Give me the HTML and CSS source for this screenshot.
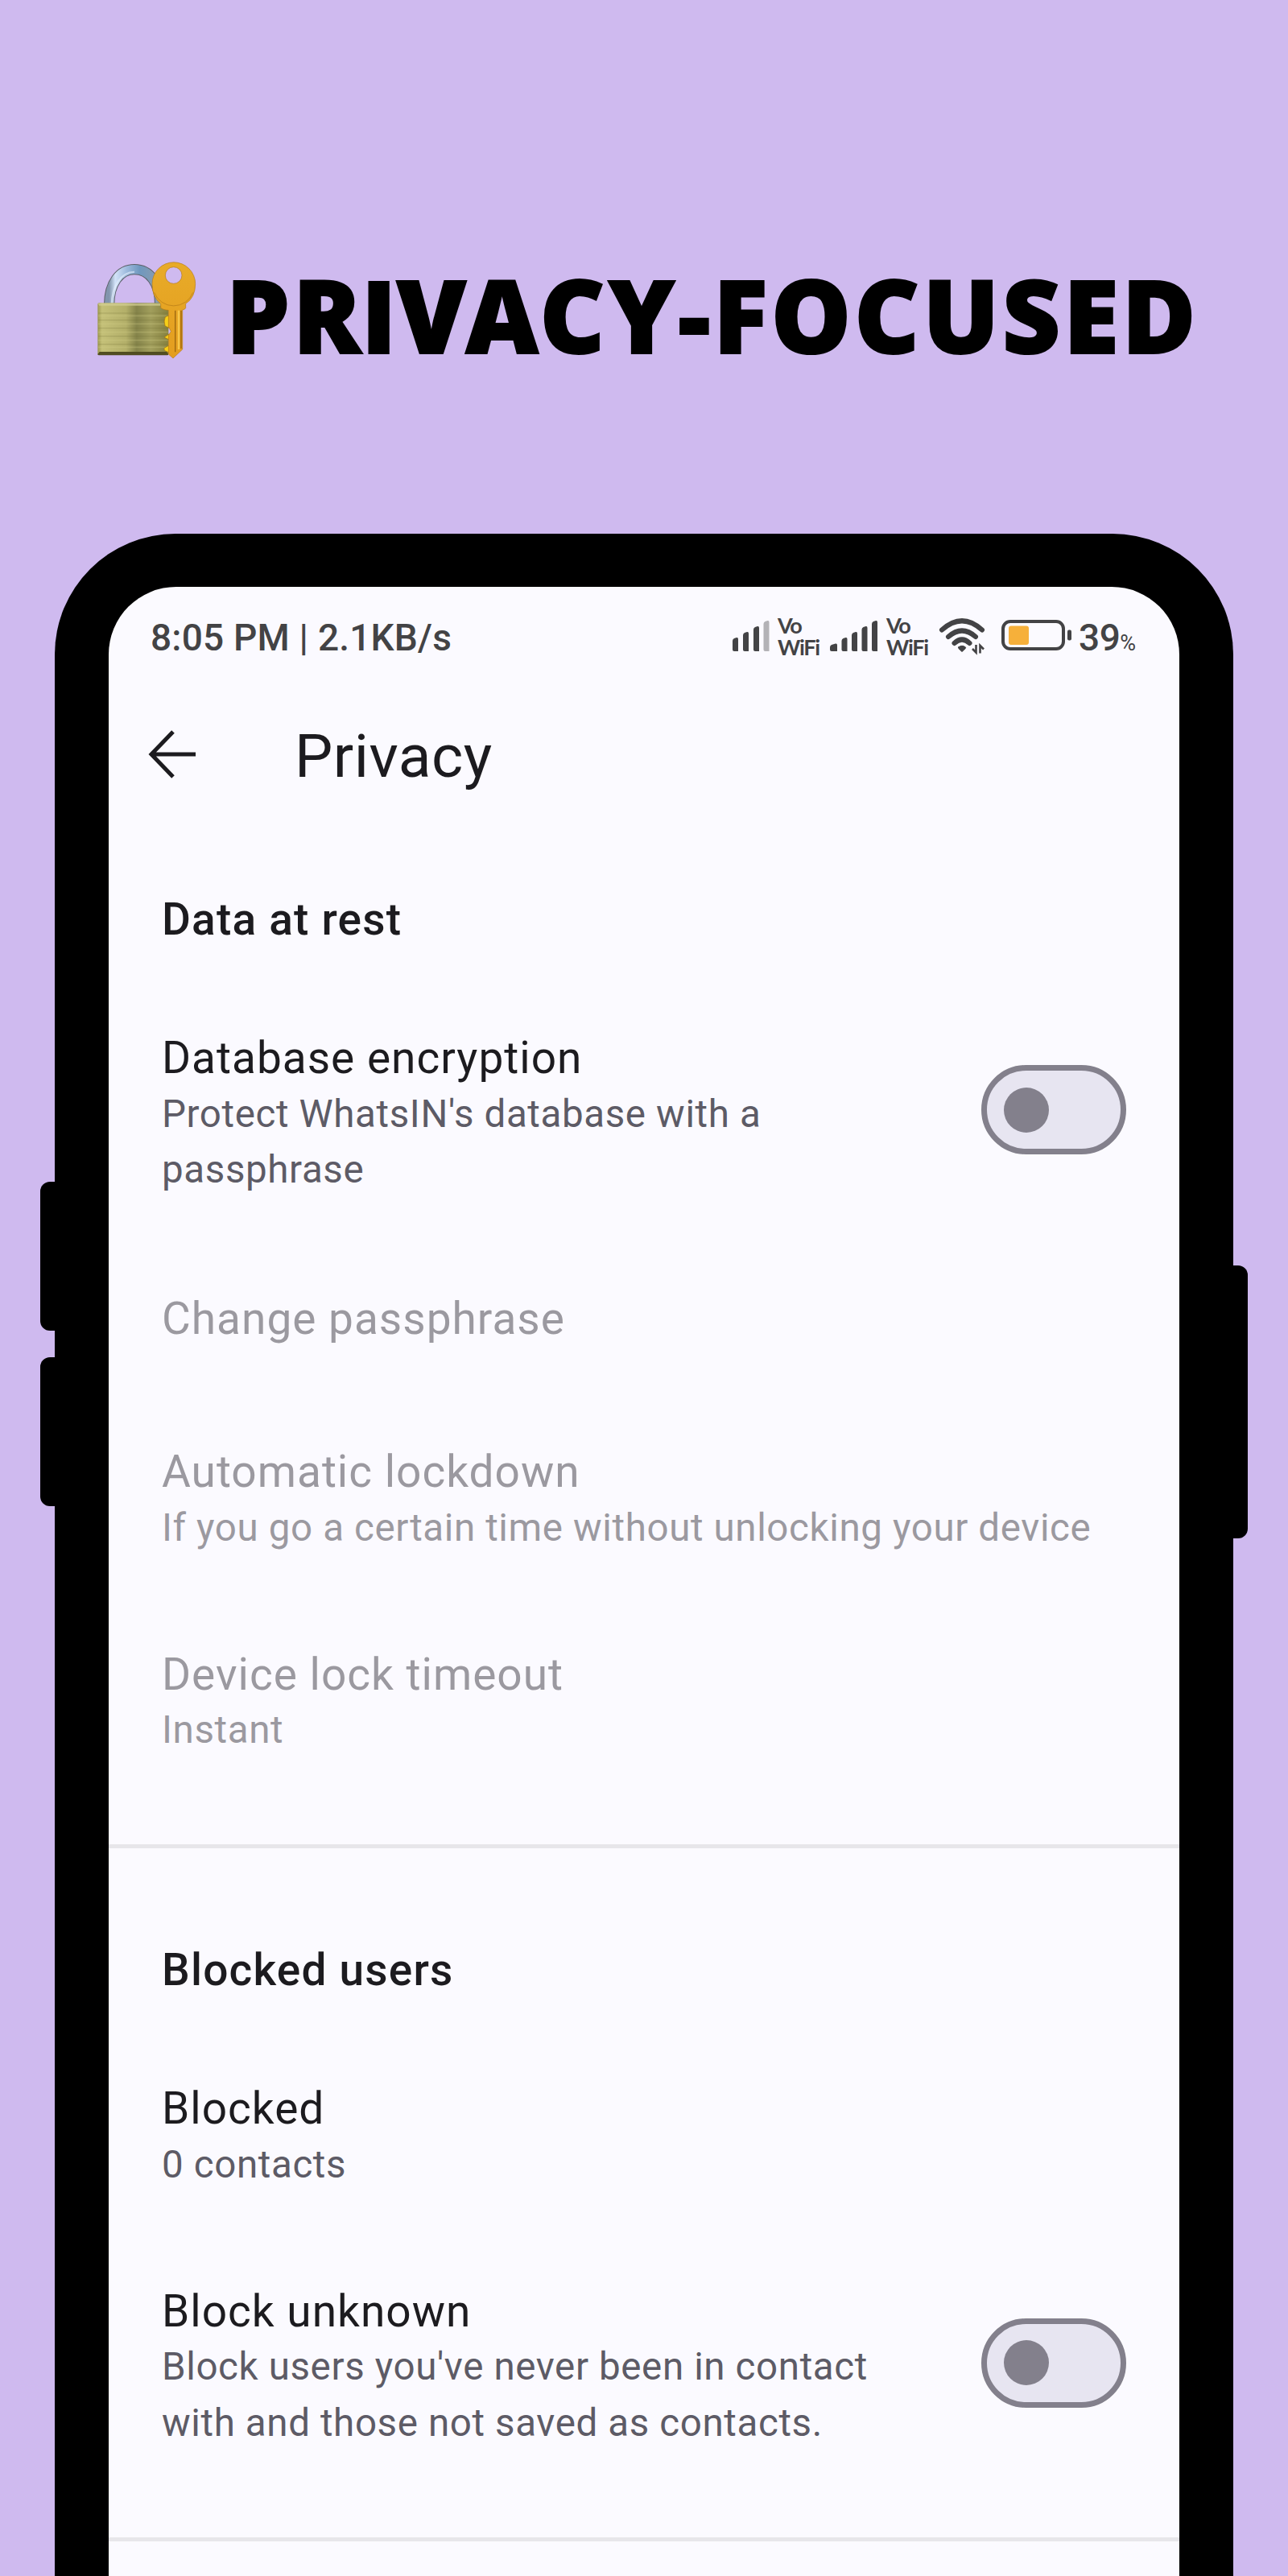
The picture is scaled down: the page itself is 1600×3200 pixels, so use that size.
FILE: index.html
```html
<!DOCTYPE html>
<html lang="en">

<head>
    <meta charset="UTF-8" />
    <meta name="viewport" content="width=device-width, initial-scale=1.0" />
    <title>Privacy-Focused</title>
    <link rel="stylesheet" href="styles.css">
</head>

<body>
    <div class="headline">
        <svg class="lock" viewBox="60 74 372 366">
            <defs>
                <linearGradient id="brass" x1="0" x2="1" y1="0" y2="0">
                    <stop offset="0" stop-color="#9c9850" />
                    <stop offset="0.06" stop-color="#c4c078" />
                    <stop offset="0.4" stop-color="#b3af69" />
                    <stop offset="0.55" stop-color="#84834a" />
                    <stop offset="0.75" stop-color="#a19e5c" />
                    <stop offset="1" stop-color="#85803f" />
                </linearGradient>
                <linearGradient id="steel" x1="0" x2="1" y1="0" y2="0">
                    <stop offset="0" stop-color="#8295ad" />
                    <stop offset="0.12" stop-color="#d3e3f8" />
                    <stop offset="0.35" stop-color="#9cb9dc" />
                    <stop offset="0.6" stop-color="#6f98bf" />
                    <stop offset="1" stop-color="#8c9cad" />
                </linearGradient>
                <linearGradient id="gold" x1="0" x2="0" y1="0" y2="1">
                    <stop offset="0" stop-color="#e8ab28" />
                    <stop offset="1" stop-color="#e39d1f" />
                </linearGradient>
            </defs>
            <path d="M107 234 C107 155 146 103 201 103 C258 103 296 155 296 234" fill="none" stroke="#5c6068" stroke-width="40" />
            <path d="M107 234 C107 155 146 103 201 103 C258 103 296 155 296 234" fill="none" stroke="url(#steel)" stroke-width="34" />
            <path d="M116 234 C117 166 150 113 201 112" fill="none" stroke="#e6f0fd" stroke-width="6" opacity="0.6" />
            <rect x="64" y="228" width="264" height="194" rx="5" fill="url(#brass)" />
            <path d="M65 230h262l-6 8H70z" fill="#d4d094" opacity="0.7" />
            <path d="M66 266h260M66 292h260M66 322h260M66 352h260M66 382h260" stroke="#706d34" stroke-width="2" opacity="0.45" />
            <path d="M66 276h260M66 306h260M66 337h260M66 367h260M66 393h260" stroke="#d3cf88" stroke-width="5" opacity="0.3" />
            <path d="M71 410h250l7 9q0 4-5 4H69q-5 0-5-4z" fill="#514d21" />
            <path d="M330 274l-14 6q-7 15-1 34l15 7zM330 344l-18 12 18 9zM330 386l-18 10q-2 8 5 11l13 6z" fill="#f6cf19" stroke="#9b6b10" stroke-width="2" />
            <path d="M267 157a80 80 0 1 1 161 0q0 50-36 74v16q-2 5-12 7v147l-35 33-17-15v-70l9-15-9-18V255q-21-1-29-9V231q-32-24-32-74zM347 94a31 31 0 1 0 0 62a31 31 0 0 0 0-62z" fill="url(#gold)" fill-rule="evenodd" stroke="#b77c16" stroke-width="2" />
            <path d="M275 189a77 77 0 0 0 144 0" fill="none" stroke="#bd8118" stroke-width="2.5" />
            <path d="M353 256v155" stroke="#9d6811" stroke-width="4" />
            <path d="M366 256v145" stroke="#f7c749" stroke-width="7" />
            <path d="M375 256v142" stroke="#b2760f" stroke-width="6" />
        </svg>
        <h1>PR<span class="plain">I</span>VACY-FOCUSED</h1>
    </div>

    <div class="phone">
        <span class="side-button volume-up"></span>
        <span class="side-button volume-down"></span>
        <span class="side-button power"></span>

        <div class="screen">
            <div class="status-bar">
                <span class="clock">8:05 PM | 2.1KB/s</span>
                <div class="status-icons">
                    <svg class="signal" width="46" height="48" viewBox="0 0 46 48" fill="#434345">
                        <path d="M0 28q0-2 2-3l3-1q2-.5 2 2v15H2q-2 0-2-2z" />
                        <path d="M13 21q0-2 2-3l3-1q2-.5 2 2v22h-5q-2 0-2-2z" />
                        <path d="M26 14q0-2 2-3l3-1q2-.5 2 2v29h-5q-2 0-2-2z" />
                        <path d="M38.500 7q0-2 2-3l3-1q2-.5 2 2v36h-5q-2 0-2-2z" fill="#b3b2b6" />
                    </svg>
                    <div class="vowifi"><span>Vo</span><span>WiFi</span></div>
                    <svg class="signal" width="60" height="48" viewBox="0 0 60 48" fill="#434345">
                        <path d="M0 36q0-2 2-3l5-1.500q2-.5 2 2V41H2q-2 0-2-2z" />
                        <path d="M14.500 28q0-2 2-3l3-1q2-.5 2 2v15h-5q-2 0-2-2z" />
                        <path d="M27 21q0-2 2-3l3-1q2-.5 2 2v22h-5q-2 0-2-2z" />
                        <path d="M39.500 14q0-2 2-3l3-1q2-.5 2 2v29h-5q-2 0-2-2z" />
                        <path d="M52 7q0-2 2-3l3-1q2-.5 2 2v36h-5q-2 0-2-2z" />
                    </svg>
                    <div class="vowifi"><span>Vo</span><span>WiFi</span></div>
                    <svg class="wifi" width="58" height="48" viewBox="0 0 58 48" fill="none" stroke="#434345" stroke-width="6" stroke-linecap="round">
                        <path d="M4 14.500Q29-8 54 14.500" />
                        <path d="M12 23Q29 8 46 23" />
                        <path d="M19.500 31Q29 22 38.500 31" />
                        <path d="M24.500 36Q29 32.500 33.500 36Q34.500 37 29 41.500Q23.500 37 24.500 36z" fill="#434345" stroke-width="1" />
                        <path d="M46.500 33v9.500l-4.500-4.500M51.500 43.500V34l4.500 4.500" stroke-width="2.600" stroke-linecap="butt" />
                    </svg>
                    <svg class="battery" width="88" height="48" viewBox="0 0 88 48">
                        <rect x="2" y="4" width="75" height="34" rx="9" fill="none" stroke="#434345" stroke-width="4" />
                        <rect x="9" y="9.500" width="25" height="23.500" rx="3" fill="#f6b03a" />
                        <rect x="82" y="14.500" width="5" height="13" rx="2" fill="#434345" />
                    </svg>
                    <span class="percent">39<small>%</small></span>
                </div>
            </div>

            <div class="app-bar">
                <svg class="back" width="60" height="60" viewBox="0 0 60 60" fill="none" stroke="#1c1b1f" stroke-width="5">
                    <path d="M59 30H4M31 2L4 30L31 58" />
                </svg>
                <h2>Privacy</h2>
            </div>

            <section>
                <h3>Data at rest</h3>
                <div class="item">
                    <div class="text">
                        <p class="title">Database encryption</p>
                        <p class="summary">Protect WhatsIN's database with a passphrase</p>
                    </div>
                    <div class="switch"></div>
                </div>
                <div class="item single disabled">
                    <p class="title">Change passphrase</p>
                </div>
                <div class="item disabled">
                    <div class="text">
                        <p class="title">Automatic lockdown</p>
                        <p class="summary">If you go a certain time without unlocking your device</p>
                    </div>
                </div>
                <div class="item disabled">
                    <div class="text">
                        <p class="title">Device lock timeout</p>
                        <p class="summary">Instant</p>
                    </div>
                </div>
            </section>

            <section>
                <h3>Blocked users</h3>
                <div class="item">
                    <div class="text">
                        <p class="title">Blocked</p>
                        <p class="summary">0 contacts</p>
                    </div>
                </div>
                <div class="item">
                    <div class="text">
                        <p class="title">Block unknown</p>
                        <p class="summary">Block users you've never been in contact with and those not saved as contacts.</p>
                    </div>
                    <div class="switch"></div>
                </div>
            </section>
        </div>
    </div>
</body>

</html>
```

FILE: styles.css
```css
* {
    box-sizing: border-box;
}

body {
    margin: 0;
    background: #cfbaef;
    font-family: Roboto, sans-serif;
    color: #1c1b1f;
}

h1,
h2,
h3,
p {
    margin: 0;
    font-weight: 400;
}

.headline {
    display: flex;
    align-items: center;
    height: 663px;
    padding: 108px 0 0 120px;
    gap: 37px;
}

.lock {
    width: 124px;
    height: 122px;
    flex: none;
}

.headline h1 {
    padding-top: 12px;
    font-family: "Noto Sans", "Open Sans", sans-serif;
    font-size: 125px;
    font-weight: 900;
    line-height: 1;
    letter-spacing: 4px;
    color: #000;
    white-space: nowrap;
    -webkit-text-stroke: 2px #000;
}

/* I without the crossbars */
.headline .plain {
    font-family: Inter, sans-serif;
    font-size: 123px;
}

.phone {
    position: relative;
    width: 1464px;
    height: 2537px;
    margin-left: 68px;
    padding: 66px 67px 0;
    background: #000;
    border-radius: 150px 150px 0 0;
}

.side-button {
    position: absolute;
    width: 40px;
    background: #000;
    border-radius: 12px;
}

.volume-up {
    left: -18px;
    top: 805px;
    height: 185px;
}

.volume-down {
    left: -18px;
    top: 1023px;
    height: 185px;
}

.power {
    right: -18px;
    top: 909px;
    height: 339px;
}

.screen {
    height: 100%;
    background: #fbfaff;
    border-radius: 84px 84px 0 0;
}

.status-bar {
    display: flex;
    align-items: center;
    justify-content: space-between;
    height: 126px;
    padding: 0 53px 0 52px;
    font-size: 46px;
    font-weight: 500;
    color: #434345;
}

.clock {
    letter-spacing: 0.2px;
}

.status-icons {
    display: flex;
    align-items: center;
    gap: 12px;
}

.vowifi {
    display: flex;
    flex-direction: column;
    width: 51px;
    margin: 0 2px 4px -2px;
    font-family: Lato, sans-serif;
    font-size: 27px;
    font-weight: 700;
    line-height: 27px;
    letter-spacing: -1.3px;
}

.battery {
    margin-left: 8px;
}

.percent {
    width: 72px;
    margin-left: -4px;
    white-space: nowrap;
    letter-spacing: -0.5px;
}

.percent small {
    font-size: 27px;
    font-weight: 400;
}

.app-bar {
    display: flex;
    align-items: center;
    height: 136px;
    padding: 32px 49px 0;
}

.back {
    margin-bottom: 5px;
}

.app-bar h2 {
    margin-left: 122px;
    font-size: 75px;
    line-height: 88px;
    letter-spacing: 0.5px;
}

section {
    padding: 117px 66px 50px;
    border-bottom: 5.5px solid #e7e6ea;
}

h3 {
    margin-bottom: 48px;
    font-size: 55px;
    font-weight: 500;
    line-height: 68.4px;
    letter-spacing: 1.2px;
}

.item {
    display: flex;
    align-items: center;
    justify-content: space-between;
    gap: 68px;
    padding: 55.8px 0 56.8px;
}

.item.single {
    padding: 59px 0 64.8px;
}

.title {
    padding-bottom: 1px;
    font-size: 55px;
    line-height: 68.4px;
    letter-spacing: 1px;
}

.summary {
    font-size: 47.5px;
    line-height: 69.4px;
    letter-spacing: 0.62px;
    color: #5d5b66;
}

.disabled .title,
.disabled .summary {
    color: #9b99a0;
}

.switch {
    flex: none;
    width: 180px;
    height: 111px;
    margin-bottom: 11px;
    padding: 20.5px;
    background: #e7e5f1;
    border: 7px solid #83808c;
    border-radius: 56px;
}

.switch::before {
    content: "";
    display: block;
    width: 56px;
    height: 56px;
    background: #83808c;
    border-radius: 50%;
}
```
